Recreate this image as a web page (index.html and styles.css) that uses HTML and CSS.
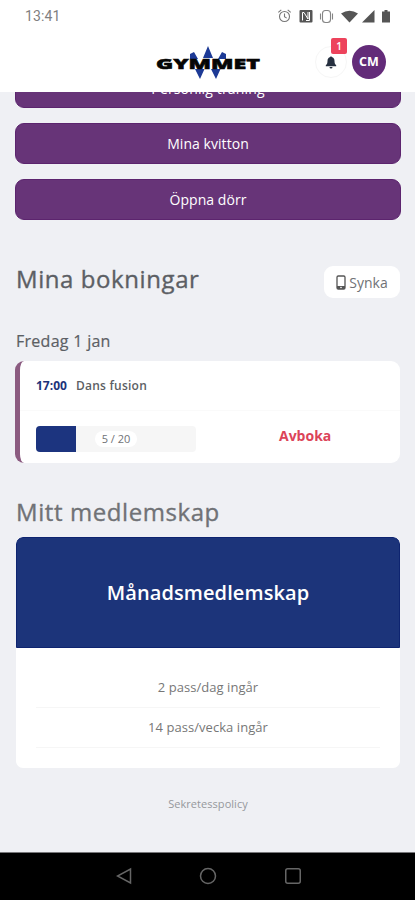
FILE: index.html
```html
<!DOCTYPE html>
<html lang="sv">
<head>
<meta charset="utf-8">
<meta name="viewport" content="width=device-width, initial-scale=1">
<title>Gymmet</title>
<link rel="stylesheet" href="styles.css">
</head>
<body>
<div class="phone">
  <div class="status">
    <span class="clock">13:41</span>
    <svg class="status-icons" width="116" height="18" viewBox="0 0 116 18">
      <g fill="none" stroke="#777" stroke-width="1.1">
        <circle cx="7.5" cy="9.5" r="5"/>
        <path d="M7.500 6.500v3.300l2.200 1.300M1.300 5.300l3-2.500M13.700 5.300l-3-2.500"/>
      </g>
      <rect x="22.500" y="3" width="13" height="12.500" rx="1" fill="#555"/>
      <path d="M25.500 13.500V5.500h1.500l4 6.500V5M29 13.500h3.500V5" fill="none" stroke="#fff" stroke-width="1"/>
      <g fill="none" stroke="#858585" stroke-width="1.100">
        <rect x="45.500" y="3.500" width="8" height="12" rx="3"/>
        <path d="M43.500 6.500v6M55.500 6.500v6"/>
      </g>
      <path d="M64 6.500Q72.500 .8 81 6.500L72.500 15.500Z" fill="#555"/>
      <path d="M97.500 3v12.500H85Z" fill="#555"/>
      <path d="M105 4.500h2.500V3h3v1.500h2.500v11H105Z" fill="#555"/>
    </svg>
  </div>
  <header class="header">
    <svg class="logo" width="106" height="36" viewBox="0 0 106 36">
      <g fill="#1d3a96">
        <path d="M53 1l5 12h-10zM35 9l4-2 4 7h-8zM71 9l-4-2-4 7h8zM40 24h9.500l-4.500 10zM56 24h9.500L61 34z"/>
      </g>
      <text class="logo-text" x="1" y="24" textLength="104" lengthAdjust="spacingAndGlyphs">GYMMET</text>
    </svg>
    <div class="bell">
      <svg width="12" height="13" viewBox="0 0 12 13" fill="#263040">
        <path d="M5.300 1a.7.700 0 0 1 1.400 0C8.700 1.500 9.500 3 9.500 5c0 2.500.6 3.300 1.700 4.300v.9H.8v-.9C1.900 8.300 2.500 7.500 2.500 5c0-2 .8-3.500 2.800-4zM4.500 11h3a1.500 1.500 0 0 1-3 0z"/>
      </svg>
      <span class="badge">1</span>
    </div>
    <div class="avatar">CM</div>
  </header>
  <main class="main">
    <div class="actions">
      <div class="btn btn-first">Personlig träning</div>
      <div class="btn">Mina kvitton</div>
      <div class="btn">Öppna dörr</div>
    </div>
    <div class="bookings-head">
      <h2 class="title">Mina bokningar</h2>
      <div class="sync">
        <svg width="10" height="15" viewBox="0 0 10 15">
          <rect x="1" y="1" width="8" height="13" rx="1.300" fill="none" stroke="#555" stroke-width="1.300"/>
          <path d="M1 11h8v3H1z" fill="#555"/>
          <circle cx="5" cy="12.500" r=".8" fill="#fff"/>
        </svg>
        <span>Synka</span>
      </div>
    </div>
    <h3 class="date">Fredag 1 jan</h3>
    <section class="booking">
      <div class="booking-top"><span class="time">17:00</span><span class="name">Dans fusion</span></div>
      <div class="booking-bottom">
        <div class="meter"><div class="fill"></div><span class="count">5 / 20</span></div>
        <span class="cancel">Avboka</span>
      </div>
    </section>
    <h2 class="title title-member">Mitt medlemskap</h2>
    <section class="member">
      <div class="member-head">Månadsmedlemskap</div>
      <div class="perks">
        <div class="perk">2 pass/dag ingår</div>
        <div class="perk">14 pass/vecka ingår</div>
      </div>
    </section>
    <div class="policy">Sekretesspolicy</div>
  </main>
  <nav class="nav">
    <svg width="16" height="18" viewBox="0 0 16 18"><path d="M14.500 2v14L1.500 9z"/></svg>
    <svg width="18" height="18" viewBox="0 0 18 18"><circle cx="9" cy="9" r="7.500"/></svg>
    <svg width="18" height="18" viewBox="0 0 18 18"><rect x="1.750" y="1.750" width="14.500" height="14.500" rx="2"/></svg>
  </nav>
</div>
</body>
</html>
```
FILE: styles.css
```css
* { box-sizing: border-box; }
body { margin: 0; font-family: "Open Sans", sans-serif; color: #5c5f64; }
h2, h3 { margin: 0; font-weight: 500; }
svg { display: block; flex: none; }
.phone { width: 415px; height: 900px; display: flex; flex-direction: column; overflow: hidden; background: #eff0f4; }

.status { height: 32px; flex: none; background: #fff; display: flex; justify-content: space-between; align-items: center; padding: 0 22px 0 25px; }
.clock { font-family: Roboto, sans-serif; font-size: 14px; letter-spacing: .1px; color: #808080; }
.status-icons { margin-top: -1px; }

.header { height: 60px; flex: none; background: #fff; display: flex; align-items: center; padding: 0 29px 2px 155px; }
.logo { margin-top: 3px; }
.logo-text { font-family: "Open Sans", sans-serif; font-weight: 800; font-size: 14px; fill: #050505; stroke: #050505; stroke-width: .5px; }
.bell { position: relative; width: 32px; height: 32px; margin-left: 54px; border: 1px solid #f6f6f6; border-radius: 50%; display: flex; align-items: center; justify-content: center; margin-top: 2px; }
.badge { position: absolute; left: 15px; top: -9px; width: 16px; height: 16px; border-radius: 2px; background: #ed435c; color: #fff; font-size: 10px; font-weight: 600; line-height: 16px; text-align: center; }
.avatar { width: 34px; height: 34px; margin-left: 5px; margin-top: 1px; flex: none; border-radius: 50%; background: #632b79; color: #fff; font-size: 12.5px; font-weight: 700; line-height: 34px; text-align: center; }

.main { flex: 1; min-height: 0; overflow: hidden; padding: 0 14px 0 15px; }
.actions { margin-top: -25px; display: flex; flex-direction: column; gap: 15px; }
.btn { height: 41px; border-radius: 9px; background: #673478; border: 1px solid #5c246e; color: #fff; font-size: 14px; letter-spacing: .05px; line-height: 39px; text-align: center; }
.btn-first { line-height: 41px; letter-spacing: .15px; }

.bookings-head { height: 34px; margin: 45px 1px 0; display: flex; justify-content: space-between; }
.title { font-size: 24px; line-height: 27px; letter-spacing: .58px; -webkit-text-stroke: .35px currentColor; }
.sync { width: 76px; height: 32px; margin-top: 1px; border-radius: 9px; background: #fff; display: flex; align-items: center; justify-content: center; gap: 3px; font-size: 14px; color: #707276; }
.date { margin: 32px 1px 0; height: 30px; font-size: 16px; line-height: 20px; letter-spacing: .28px; -webkit-text-stroke: .2px currentColor; }

.booking { height: 102px; border-left: 5px solid #8b5b80; border-radius: 9px; background: #fff; margin-right: 1px; }
.booking-top { height: 50px; border-bottom: 1px solid #fafafa; padding-left: 16px; display: flex; align-items: center; gap: 9px; font-size: 12px; font-weight: 600; }
.time { color: #1d337a; font-weight: 700; }
.name { letter-spacing: .25px; }
.booking-bottom { display: flex; padding: 15px 0 0 16px; }
.meter { width: 160px; height: 26px; display: flex; align-items: center; background: #f6f6f6; border-radius: 4px; overflow: hidden; }
.fill { width: 40px; height: 26px; background: #1c347f; }
.count { margin-left: 19px; width: 42px; border-radius: 9px; background: #fff; font-size: 11px; line-height: 16px; text-align: center; color: #707276; }
.cancel { margin-left: 83px; color: #dc4459; font-size: 14px; font-weight: 700; line-height: 20px; }

.title-member { margin: 35px 1px 0; height: 39px; line-height: 28px; color: #707276; }
.member { margin: 0 1px; height: 231px; border-radius: 7px; background: #fff; overflow: hidden; }
.member-head { height: 111px; border: 1px solid #0e2470; border-radius: 7px 7px 0 0; background: #1c347a; color: #fff; font-size: 20px; font-weight: 600; letter-spacing: .1px; line-height: 110px; text-align: center; }
.perks { padding: 20px 20px 0; }
.perk { height: 40px; border-bottom: 1px solid #f6f6f6; color: #777; font-size: 13px; letter-spacing: .05px; line-height: 38px; text-align: center; }
.policy { margin-top: 28px; color: #96989c; font-size: 11px; letter-spacing: .05px; line-height: 16px; text-align: center; }

.nav { height: 48px; flex: none; background: #000; border-top: 1px solid #77777a; display: flex; align-items: center; gap: 67px; padding: 0 0 1px 116px; }
.nav svg { fill: none; stroke: #666; stroke-width: 1.5; }
```
